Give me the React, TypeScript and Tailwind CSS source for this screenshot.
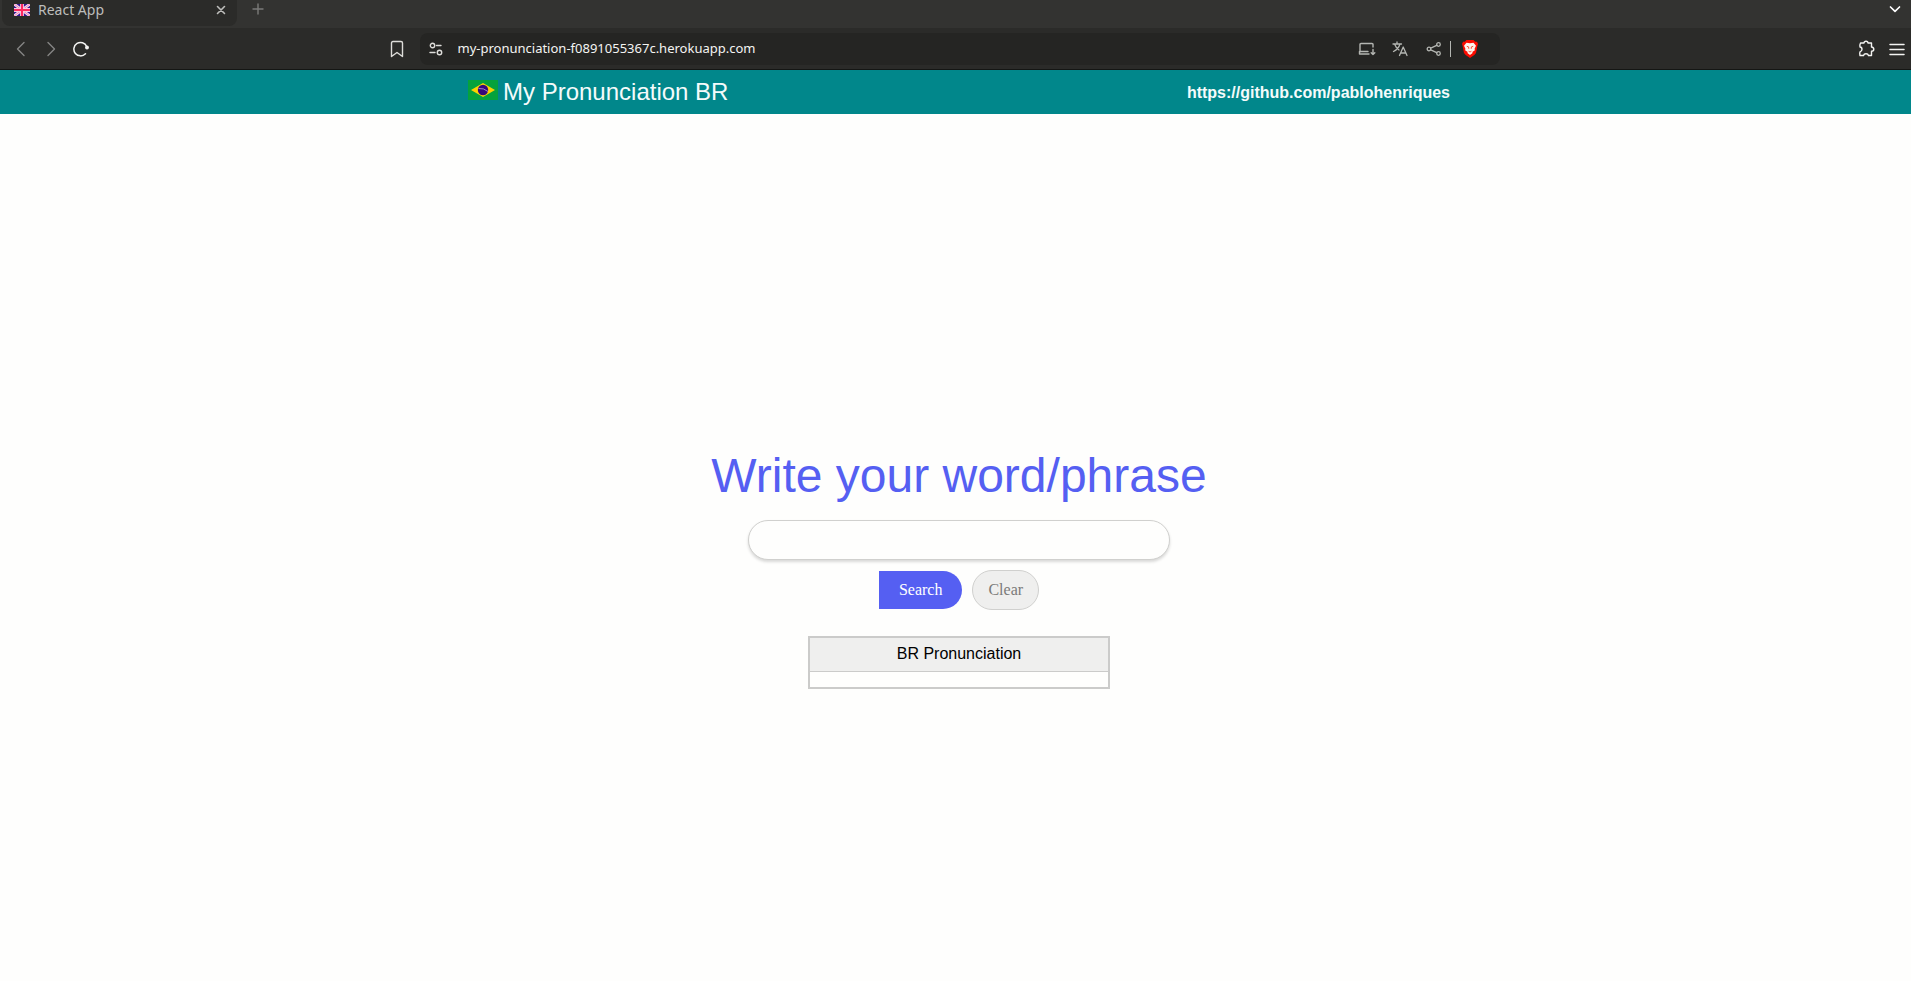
import React, { useState } from "react";

const stroke = { fill: "none", stroke: "currentColor", strokeLinecap: "round", strokeLinejoin: "round" } as const;

function UkFlag() {
  return (
    <svg viewBox="0 0 16 12" className="h-3 w-4 shrink-0" aria-hidden="true">
      <rect width="16" height="12" fill="#35148f" />
      <path d="M0 0L16 12M16 0L0 12" stroke="#f0dcf4" strokeWidth="2.8" />
      <path d="M0 0L16 12M16 0L0 12" stroke="#ff6a9c" strokeWidth="0.8" />
      <path d="M8 0V12M0 6H16" stroke="#f8c8e0" strokeWidth="3.800" />
      <path d="M8 0V12M0 6H16" stroke="#ff2860" strokeWidth="2" />
    </svg>
  );
}

function BrazilFlag() {
  return (
    <svg viewBox="0 0 30 20" className="mb-1 h-5 w-[30px] shrink-0" aria-hidden="true">
      <rect width="30" height="20" fill="#05a23c" />
      <path d="M3 10L15 3L27 10L15 17Z" fill="#fcd200" />
      <circle cx="15" cy="10" r="5.2" fill="#36087a" />
      <path d="M10.500 8.500Q15.500 7.800 20 11.500" fill="none" stroke="#b9a3dc" strokeWidth="0.8" />
    </svg>
  );
}

function BraveIcon() {
  return (
    <svg viewBox="0 0 16 18" className="h-[18px] w-4" aria-hidden="true">
      <path d="M4.500 0H11.500L13.300 1.800L15 1.700L16 4L15.400 5.800L14 13L12.300 15L8 18L3.700 15L2 13L.6 5.800L0 4L1 1.700L2.700 1.800Z" fill="#fb0b00" />
      <path d="M4.500 2.800L8 3.300L11.500 2.800L14 5.800L12.600 8.800L12.900 10.300L10.300 12L10.600 13L8 15L5.400 13L5.700 12L3.100 10.300L3.400 8.800L2 5.800Z" fill="#fff4ee" />
      <path d="M4.800 6.300L6.600 6.900L6.800 8.800M11.200 6.300L9.400 6.900L9.200 8.800M6.600 11.300L8 12L9.400 11.300" fill="none" stroke="#fb3b20" strokeWidth="0.9" />
    </svg>
  );
}

function TabStrip() {
  return (
    <div className="flex h-7 items-start bg-[#333331] pl-[2px] pr-[9px] text-[#bdbdbb]">
      <div className="flex h-[26px] w-[235px] items-start rounded-b-lg bg-[#2b2b29] pl-3 pr-[11px]">
        <div className="flex h-5 w-full items-center">
          <UkFlag />
          <span className="ml-2 flex-1 font-['Noto_Sans',sans-serif] text-sm leading-5">React App</span>
          <button aria-label="Close tab">
            <svg viewBox="0 0 10 10" className="size-[10px]" {...stroke} strokeWidth="1.600"><path d="M1.500 1.500L8.500 8.500M8.500 1.500L1.500 8.500" /></svg>
          </button>
        </div>
      </div>
      <button aria-label="New tab" className="ml-[15px] flex h-[18px] items-center text-[#7b7b79]">
        <svg viewBox="0 0 12 12" className="size-3" {...stroke} strokeWidth="1.400"><path d="M6 1V11M1 6H11" /></svg>
      </button>
      <button aria-label="Search tabs" className="ml-auto flex h-[18px] items-center text-white">
        <svg viewBox="0 0 14 10" className="h-[10px] w-[14px]" {...stroke} strokeWidth="1.700"><path d="M2.500 3L7 7.300L11.500 3" /></svg>
      </button>
    </div>
  );
}

function Toolbar() {
  return (
    <div className="flex h-[42px] items-center border-b border-[#151614] bg-[#2b2b29] pl-[13px] pr-[5px] text-[#deddda]">
      <div className="flex items-center gap-[14px]">
        <button aria-label="Back" className="text-[#858583]">
          <svg viewBox="0 0 16 16" className="size-4" {...stroke} strokeWidth="1.400"><path d="M11 1.500L4.500 8L11 14.500" /></svg>
        </button>
        <button aria-label="Forward" className="text-[#858583]">
          <svg viewBox="0 0 16 16" className="size-4" {...stroke} strokeWidth="1.400"><path d="M5 1.500L11.500 8L5 14.500" /></svg>
        </button>
        <button aria-label="Reload" className="text-[#f4f4f2]">
          <svg viewBox="0 0 16 16" className="size-4" {...stroke} strokeWidth="1.500">
            <path d="M12.500 12.700A6.700 6.700 0 1 1 13.700 5.500" />
            <circle cx="14" cy="6.500" r="1.200" fill="currentColor" />
          </svg>
        </button>
      </div>
      <div className="flex flex-1 items-center justify-center gap-4 pr-[58px]">
        <button aria-label="Bookmark">
          <svg viewBox="0 0 14 18" className="h-[18px] w-[14px]" {...stroke} strokeWidth="1.400"><path d="M3 1.500H11Q12.500 1.500 12.500 3V16.500L7 12.500L1.500 16.500V3Q1.500 1.500 3 1.500Z" /></svg>
        </button>
        <div className="flex h-8 w-[1080px] items-center rounded-lg bg-[#252523] pl-[9px] pr-[22px]">
          <button aria-label="Site information">
            <svg viewBox="0 0 14 14" className="size-[14px]" {...stroke} strokeWidth="1.400">
              <circle cx="3.500" cy="3.500" r="2.200" /><path d="M7.500 3.500H12M1 10.500H6" /><circle cx="10.500" cy="10.500" r="2.200" />
            </svg>
          </button>
          <input aria-label="Address" defaultValue="my-pronunciation-f0891055367c.herokuapp.com" className="ml-[15px] min-w-0 flex-1 bg-transparent font-['Noto_Sans',sans-serif] text-[13px] text-[#f4f4f2] outline-none" />
          <div className="flex items-center text-[#b4b6b2]">
            <button aria-label="Install app">
              <svg viewBox="0 0 18 14" className="h-[14px] w-[18px]" {...stroke} strokeWidth="1.400"><path d="M15 5V2.500Q15 1.500 14 1.500H3Q2 1.500 2 2.500V10M10 9.500H1.500V12H11M15 7.500V12.500M13.200 10.700L15 12.500L16.800 10.700" /></svg>
            </button>
            <button aria-label="Translate" className="ml-4">
              <svg viewBox="0 0 16 16" className="size-4" {...stroke} strokeWidth="1.300"><path d="M1 3H9.500M5 1V3M2.500 3Q4 7 7 9M8 3Q6.500 8 1.500 10.500M7.500 14.500L11.200 6L15 14.500M8.800 12H13.700" /></svg>
            </button>
            <button aria-label="Share" className="ml-[18px]">
              <svg viewBox="0 0 16 16" className="size-4" {...stroke} strokeWidth="1.300"><circle cx="3" cy="8" r="1.800" /><circle cx="12.500" cy="3.500" r="1.800" /><circle cx="12.500" cy="12.500" r="1.800" /><path d="M4.800 7.200L10.700 4.300M4.800 8.800L10.700 11.700" /></svg>
            </button>
            <span className="ml-2 h-4 w-px bg-[#b4b6b2]" />
            <button aria-label="Brave Shields" className="ml-[11px]"><BraveIcon /></button>
          </div>
        </div>
      </div>
      <div className="flex items-center gap-[13px] text-[#f4f4f2]">
        <button aria-label="Extensions">
          <svg viewBox="0 0 17 17" className="size-[17px]" {...stroke} strokeWidth="1.400"><path d="M2.500 3H6Q6 1.200 8 1.200T10 3H13.500V7Q15.800 7.300 15.800 9.200T13.500 11.300V15.500H10.500Q10 13.700 8 13.700T5.500 15.500H2Q1.500 13.500 2 11.800Q4 11.200 4 9.200T2 7Q1.500 5 2.500 3Z" /></svg>
        </button>
        <button aria-label="Menu">
          <svg viewBox="0 0 18 14" className="h-[14px] w-[18px]" {...stroke} strokeWidth="1.500"><path d="M2 2.500H16M2 7.500H16M2 12.500H16" /></svg>
        </button>
      </div>
    </div>
  );
}

export default function App() {
  const [word, setWord] = useState("");
  return (
    <div className="flex min-h-screen flex-col bg-[#fefefd] font-['Liberation_Sans',Arial,sans-serif]">
      <TabStrip />
      <Toolbar />
      <header className="flex h-11 items-center justify-center bg-[#01878b] pl-[7px] text-[#f4fbfb]">
        <div className="flex w-full max-w-[982px] items-center justify-between">
          <div className="flex items-center gap-[5px]">
            <BrazilFlag />
            <h1 className="text-2xl leading-7">My Pronunciation BR</h1>
          </div>
          <a href="https://github.com/pablohenriques" className="pt-[2px] text-base font-bold">https://github.com/pablohenriques</a>
        </div>
      </header>
      <main className="flex flex-1 flex-col items-center justify-center pl-[7px] pt-[42px]">
        <form className="flex flex-col items-center" onSubmit={(e) => e.preventDefault()}>
          <label htmlFor="word" className="text-5xl leading-[56px] text-[#555ff2]">Write your word/phrase</label>
          <input id="word" value={word} onChange={(e) => setWord(e.target.value)} className="mt-4 h-10 w-[422px] rounded-full border border-[#d0d0ce] bg-[#fefefd] px-5 shadow-[0_2px_3px_rgba(0,0,0,0.15)] outline-none" />
          <div className="mt-[10px] flex items-center gap-[10px] font-['Liberation_Serif','Times_New_Roman',serif] text-base">
            <button type="submit" className="h-[38px] rounded-r-full bg-[#555ff2] px-5 text-white">Search</button>
            <button type="button" onClick={() => setWord("")} className="h-10 rounded-full border border-[#d0d0ce] bg-[#efefee] px-[15px] text-[#7b7b79]">Clear</button>
          </div>
        </form>
        <table className="mt-[26px] w-[302px] border-collapse border-2 border-[#cbcbca]">
          <thead>
            <tr><th className="h-[34px] border-b border-[#cbcbca] bg-[#efefee] text-base font-normal text-black">BR Pronunciation</th></tr>
          </thead>
          <tbody>
            <tr><td className="h-[17px]" /></tr>
          </tbody>
        </table>
      </main>
    </div>
  );
}
